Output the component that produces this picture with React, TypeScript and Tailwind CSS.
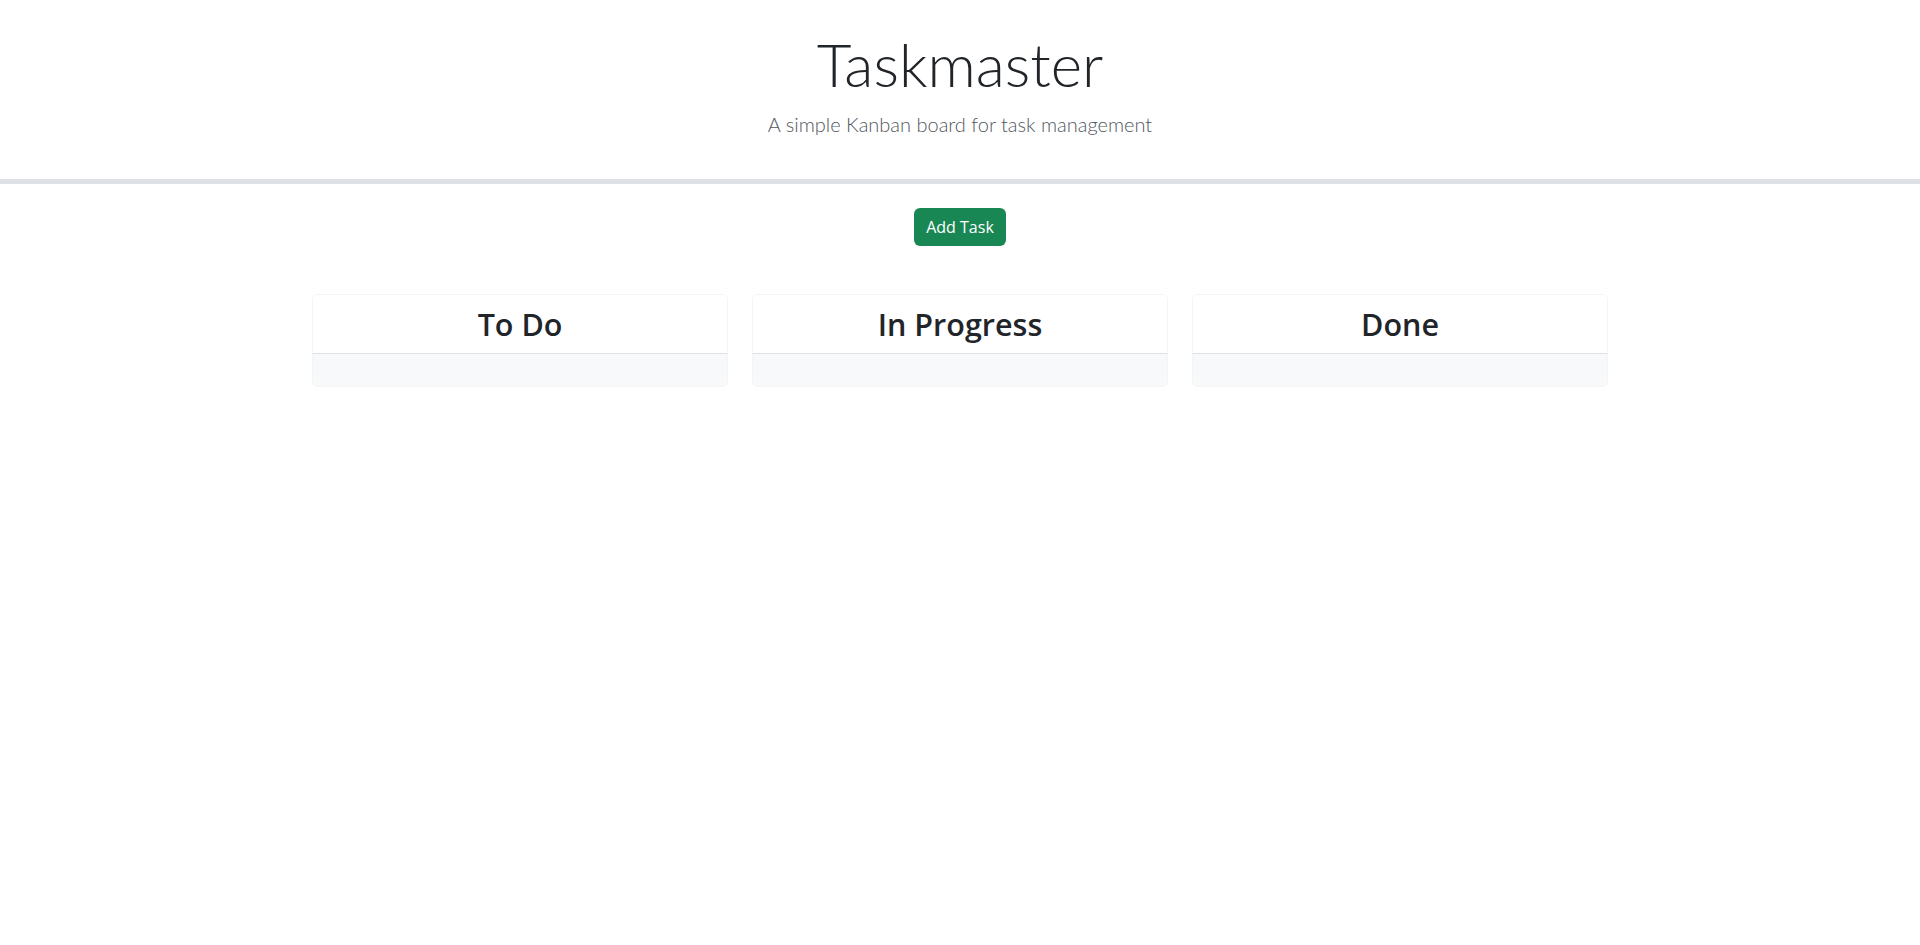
import React from 'react';

const columns = ['To Do', 'In Progress', 'Done'];

const Column = ({ title }: { title: string }) => {
  return (
    <div className="px-3">
      <div className="rounded-md border border-[#f3f4f5] overflow-hidden">
        <div className="bg-white border-b border-[#dee2e6] py-[10px] text-center">
          <h2 className="text-[30.5px] leading-[38px] font-semibold text-[#212529]">{title}</h2>
        </div>
        <div className="bg-[#f8f9fa] h-[32px]"></div>
      </div>
    </div>
  );
};

const App = () => {
  return (
    <div className="min-h-screen bg-white font-['Open_Sans',sans-serif] text-[#212529]">
      <header className="text-center pt-[26px] pb-[40px] border-b-[5px] border-[#dee2e6] font-['Lato',sans-serif]">
        <h1 className="text-[60px] leading-[76px] font-light text-[#212529]">Taskmaster</h1>
        <p className="mt-[7px] text-[20px] leading-[30px] font-light text-[#50575e]">
          A simple Kanban board for task management
        </p>
      </header>

      <main className="max-w-[1320px] mx-auto px-3">
        <div className="flex justify-center pt-[24px]">
          <button className="bg-[#198754] text-white text-[16px] leading-[24px] px-3 py-[7px] rounded-md hover:bg-[#157347]">
            Add Task
          </button>
        </div>

        <div className="grid grid-cols-3 -mx-3 mt-[48px]">
          {columns.map((c) => (
            <Column key={c} title={c} />
          ))}
        </div>
      </main>
    </div>
  );
};

export default App;
